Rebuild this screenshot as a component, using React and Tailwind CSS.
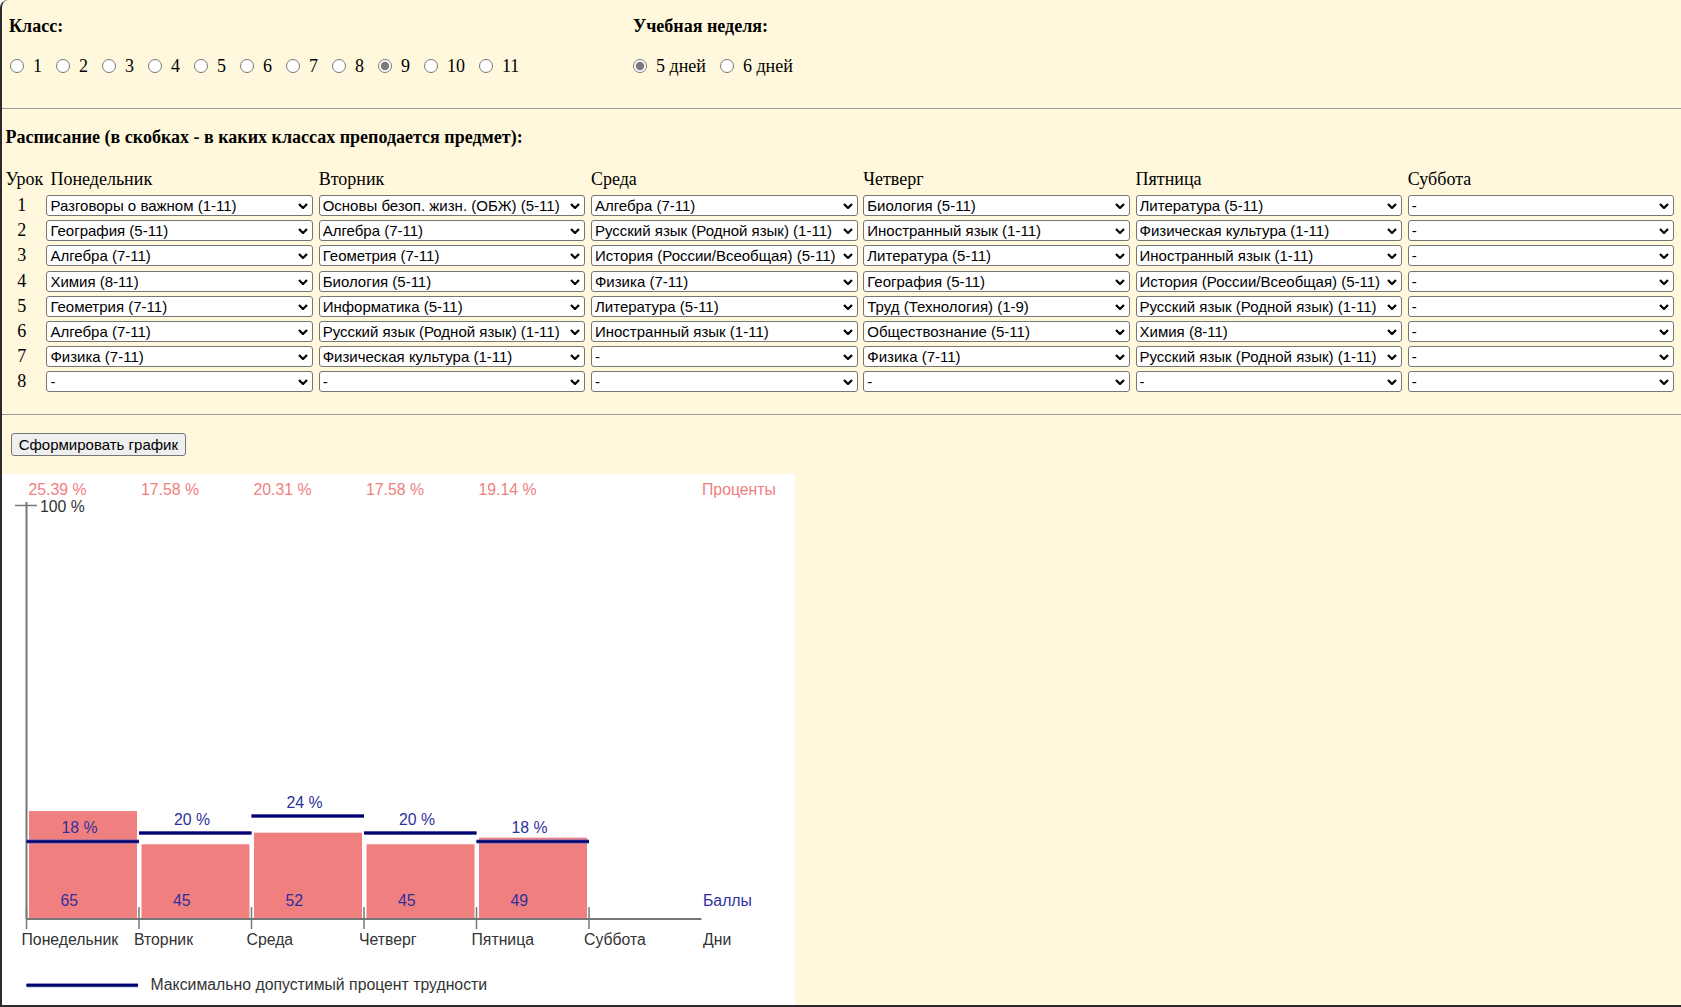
import React, { useState } from "react";

const classes = ["1", "2", "3", "4", "5", "6", "7", "8", "9", "10", "11"];

const days = ["Понедельник", "Вторник", "Среда", "Четверг", "Пятница", "Суббота"];

// расписание по дням (8 уроков)
const schedule = [
  [
    "Разговоры о важном (1-11)",
    "География (5-11)",
    "Алгебра (7-11)",
    "Химия (8-11)",
    "Геометрия (7-11)",
    "Алгебра (7-11)",
    "Физика (7-11)",
    "-",
  ],
  [
    "Основы безоп. жизн. (ОБЖ) (5-11)",
    "Алгебра (7-11)",
    "Геометрия (7-11)",
    "Биология (5-11)",
    "Информатика (5-11)",
    "Русский язык (Родной язык) (1-11)",
    "Физическая культура (1-11)",
    "-",
  ],
  [
    "Алгебра (7-11)",
    "Русский язык (Родной язык) (1-11)",
    "История (России/Всеобщая) (5-11)",
    "Физика (7-11)",
    "Литература (5-11)",
    "Иностранный язык (1-11)",
    "-",
    "-",
  ],
  [
    "Биология (5-11)",
    "Иностранный язык (1-11)",
    "Литература (5-11)",
    "География (5-11)",
    "Труд (Технология) (1-9)",
    "Обществознание (5-11)",
    "Физика (7-11)",
    "-",
  ],
  [
    "Литература (5-11)",
    "Физическая культура (1-11)",
    "Иностранный язык (1-11)",
    "История (России/Всеобщая) (5-11)",
    "Русский язык (Родной язык) (1-11)",
    "Химия (8-11)",
    "Русский язык (Родной язык) (1-11)",
    "-",
  ],
  ["-", "-", "-", "-", "-", "-", "-", "-"],
];

const subjects = [
  "-",
  ...Array.from(new Set(schedule.flat().filter((s) => s !== "-"))),
];

// данные графика
const points = [65, 45, 52, 45, 49];
const percents = ["25.39", "17.58", "20.31", "17.58", "19.14"];
const maxPct = [18, 20, 24, 20, 18];
const ticks = [26.5, 139, 251.5, 364, 476.5, 589];
const base = 917;
const k = 4.25;

const Radio = ({ name, label, checked, onChange }) => (
  <label className="flex items-center mr-[14px]">
    <input
      type="radio"
      name={name}
      checked={checked}
      onChange={onChange}
      className="w-[14px] h-[14px] m-0 accent-[#7a7a7a]"
    />
    <span className="ml-[9px]">{label}</span>
  </label>
);

const Select = ({ value }) => (
  <div className="relative h-[21px]">
    <select
      defaultValue={value}
      className="block appearance-none w-full h-[21px] border border-[#767676] rounded-[3px] bg-white pl-[3px] pr-[16px] text-[15px] leading-[19px] font-['Liberation_Sans',Arial,sans-serif] text-black"
    >
      {subjects.map((s) => (
        <option key={s} value={s}>
          {s}
        </option>
      ))}
    </select>
    <svg
      className="pointer-events-none absolute right-[5px] top-[8px]"
      width="10"
      height="6"
      viewBox="0 0 10 6"
    >
      <path d="M1 1 L5 5 L9 1" fill="none" stroke="#000" strokeWidth="2.2" />
    </svg>
  </div>
);

const Chart = () => {
  const txt = {
    fontFamily: "'Liberation Sans', Arial, sans-serif",
    fontSize: 15.8,
  };
  return (
    <svg
      width="793"
      height="533"
      viewBox="2 472 793 533"
      className="block bg-white"
      style={txt}
    >
      {percents.map((p, i) => (
        <text key={"p" + i} x={ticks[i] + 2} y={492.5} fill="#f08080">
          {p} %
        </text>
      ))}
      <text x={702} y={492.5} fill="#f08080">
        Проценты
      </text>

      {points.map((v, i) => {
        const h = parseFloat(percents[i]) * k;
        return (
          <rect
            key={"b" + i}
            x={ticks[i] + 2.5}
            y={base - h}
            width={108}
            height={h}
            fill="#f08080"
          />
        );
      })}

      <line x1={26.5} y1={500} x2={26.5} y2={base} stroke="#777" strokeWidth="2" />
      <line x1={15} y1={503.5} x2={37} y2={503.5} stroke="#777" strokeWidth="1.5" />
      <text x={40} y={509.5} fill="#333">
        100 %
      </text>

      <line x1={26.5} y1={base} x2={701.5} y2={base} stroke="#777" strokeWidth="2" />
      {ticks.map((t, i) => (
        <line key={"t" + i} x1={t} y1={905} x2={t} y2={927} stroke="#777" strokeWidth="1.5" />
      ))}

      {maxPct.map((m, i) => {
        const y = base - m * k - 1;
        return (
          <g key={"m" + i}>
            <line x1={ticks[i]} y1={y} x2={ticks[i + 1]} y2={y} stroke="#6d6db8" strokeWidth="4" />
            <line x1={ticks[i]} y1={y} x2={ticks[i + 1]} y2={y} stroke="#00006e" strokeWidth="2.5" />
            <text x={ticks[i] + 35} y={y - 8.5} fill="#2f2f9c">
              {m} %
            </text>
          </g>
        );
      })}

      {points.map((v, i) => (
        <text key={"v" + i} x={ticks[i] + 34} y={903.5} fill="#2f2f9c">
          {v}
        </text>
      ))}
      <text x={703} y={903.5} fill="#2f2f9c">
        Баллы
      </text>

      {days.map((d, i) => (
        <text key={"d" + i} x={ticks[i] - 5} y={943} fill="#333">
          {d}
        </text>
      ))}
      <text x={703} y={943} fill="#333">
        Дни
      </text>

      <line x1={26.5} y1={983.3} x2={138} y2={983.3} stroke="#6d6db8" strokeWidth="4" />
      <line x1={26.5} y1={983.3} x2={138} y2={983.3} stroke="#00006e" strokeWidth="2.5" />
      <text x={150.5} y={987.5} fill="#333">
        Максимально допустимый процент трудности
      </text>
    </svg>
  );
};

export default function App() {
  const [grade, setGrade] = useState("9");
  const [week, setWeek] = useState("5");

  return (
    <div className="h-[1007px] overflow-hidden bg-[#fff8dc] border-l-2 border-b-2 border-[#2b2b2b] rounded-tl-[8px] font-['Liberation_Serif',serif] text-[18px] text-black">
      <div className="h-[108px] pt-[16px] pl-[7px] flex">
        <div className="w-[624px]">
          <div className="h-[21px] leading-[21px] font-bold">Класс:</div>
          <div className="mt-[19px] h-[20px] flex items-center pl-[1px]">
            {classes.map((c) => (
              <Radio
                key={c}
                name="grade"
                label={c}
                checked={grade === c}
                onChange={() => setGrade(c)}
              />
            ))}
          </div>
        </div>
        <div>
          <div className="h-[21px] leading-[21px] font-bold">Учебная неделя:</div>
          <div className="mt-[19px] h-[20px] flex items-center">
            <Radio name="week" label="5 дней" checked={week === "5"} onChange={() => setWeek("5")} />
            <Radio name="week" label="6 дней" checked={week === "6"} onChange={() => setWeek("6")} />
          </div>
        </div>
      </div>
      <div className="h-px bg-[#9a9a9a]" />

      <div className="pt-[18px] pl-[3.4px] h-[21px] leading-[21px] font-bold box-content">
        Расписание (в скобках - в каких классах преподается предмет):
      </div>

      <div className="mt-[21px] pl-[2.8px] grid grid-cols-[36px_repeat(6,266.7px)] gap-x-[5.6px] h-[20px] leading-[20px]">
        <div className="pl-[0.6px]">Урок</div>
        {days.map((d, i) => (
          <div key={d} className={i === 0 ? "pl-[4px]" : ""}>
            {d}
          </div>
        ))}
      </div>

      <div className="mt-[6px] pl-[2.8px] grid grid-cols-[36px_repeat(6,266.7px)] gap-x-[5.6px] gap-y-[4.2px]">
        {Array.from({ length: 8 }).map((_, r) => (
          <React.Fragment key={r}>
            <div className="h-[21px] leading-[21px] text-center pr-[2px]">{r + 1}</div>
            {schedule.map((col, d) => (
              <Select key={d} value={col[r]} />
            ))}
          </React.Fragment>
        ))}
      </div>

      <div className="mt-[21.5px] h-px bg-[#9a9a9a]" />

      <button className="mt-[18px] ml-[8.7px] h-[23px] px-[7px] border border-[#767676] rounded-[3px] bg-[#efefef] text-[15px] font-['Liberation_Sans',Arial,sans-serif] text-black">
        Сформировать график
      </button>

      <div className="mt-[16px]">
        <Chart />
      </div>
    </div>
  );
}
